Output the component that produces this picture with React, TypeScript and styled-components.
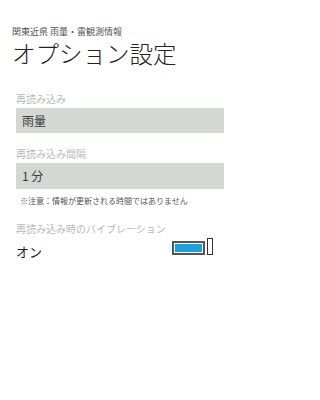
import React from 'react'
import styled, { createGlobalStyle } from 'styled-components'

const GlobalStyle = createGlobalStyle`
  html, body {
    margin: 0;
    padding: 0;
    background: #ffffff;
  }
  body {
    font-family: 'Noto Sans CJK JP', 'Noto Sans', sans-serif;
    color: #222222;
  }
`

const Page = styled.div`
  width: 240px;
  height: 400px;
  background: #ffffff;
  overflow: hidden;
`

const Header = styled.header`
  padding: 25.5px 12px 0;
`

const AppName = styled.div`
  font-size: 9px;
  line-height: 12px;
  color: #555555;
  white-space: nowrap;
`

const Title = styled.h1`
  margin: 1.5px 0 0;
  font-size: 23.5px;
  line-height: 28px;
  font-weight: 300;
  color: #222222;
  white-space: nowrap;
`

const Content = styled.main`
  display: flex;
  flex-direction: column;
  padding: 26.5px 16px 0;
`

const Field = styled.section<{ $gap?: number }>`
  display: flex;
  flex-direction: column;
  gap: 4px;
  margin-top: ${({ $gap }) => $gap ?? 0}px;
`

const Label = styled.div`
  font-size: 10px;
  line-height: 10px;
  color: #b9b9b9;
  white-space: nowrap;
`

const SelectBox = styled.div`
  display: flex;
  align-items: center;
  height: 25.5px;
  padding: 0 6px;
  background: #d4d8d2;
  font-size: 12px;
  color: #3c3c3c;
`

const Note = styled.p`
  margin: 8.5px 0 0;
  padding-left: 4px;
  font-size: 8px;
  line-height: 8px;
  color: #555555;
  white-space: nowrap;
`

const ToggleRow = styled.div`
  display: flex;
  align-items: flex-start;
  justify-content: space-between;
  padding-right: 11px;
`

const ToggleText = styled.span`
  margin-top: 6.5px;
  font-size: 13px;
  line-height: 13px;
  color: #222222;
`

const Switch = styled.div`
  display: flex;
  align-items: center;
  gap: 1.5px;
`

const Track = styled.div<{ $on: boolean }>`
  box-sizing: border-box;
  width: 33px;
  height: 14px;
  margin-top: 2px;
  padding: 1px;
  border: 2px solid #555555;
  background: #ffffff;
  &::after {
    content: '';
    display: block;
    width: 100%;
    height: 100%;
    background: ${({ $on }) => ($on ? '#1ba1e2' : 'transparent')};
  }
`

const Thumb = styled.div`
  box-sizing: border-box;
  width: 6.5px;
  height: 17px;
  border: 1.5px solid #333333;
  background: #ffffff;
`

export default function App() {
  const vibrate = true
  return (
    <Page>
      <GlobalStyle />
      <Header>
        <AppName>関東近県 雨量・雷観測情報</AppName>
        <Title>オプション設定</Title>
      </Header>
      <Content>
        <Field>
          <Label>再読み込み</Label>
          <SelectBox>雨量</SelectBox>
        </Field>
        <Field $gap={16}>
          <Label>再読み込み間隔</Label>
          <SelectBox>1 分</SelectBox>
        </Field>
        <Note>※注意：情報が更新される時間ではありません</Note>
        <Field $gap={19}>
          <Label>再読み込み時のバイブレーション</Label>
          <ToggleRow>
            <ToggleText>{vibrate ? 'オン' : 'オフ'}</ToggleText>
            <Switch>
              <Track $on={vibrate} />
              <Thumb />
            </Switch>
          </ToggleRow>
        </Field>
      </Content>
    </Page>
  )
}
